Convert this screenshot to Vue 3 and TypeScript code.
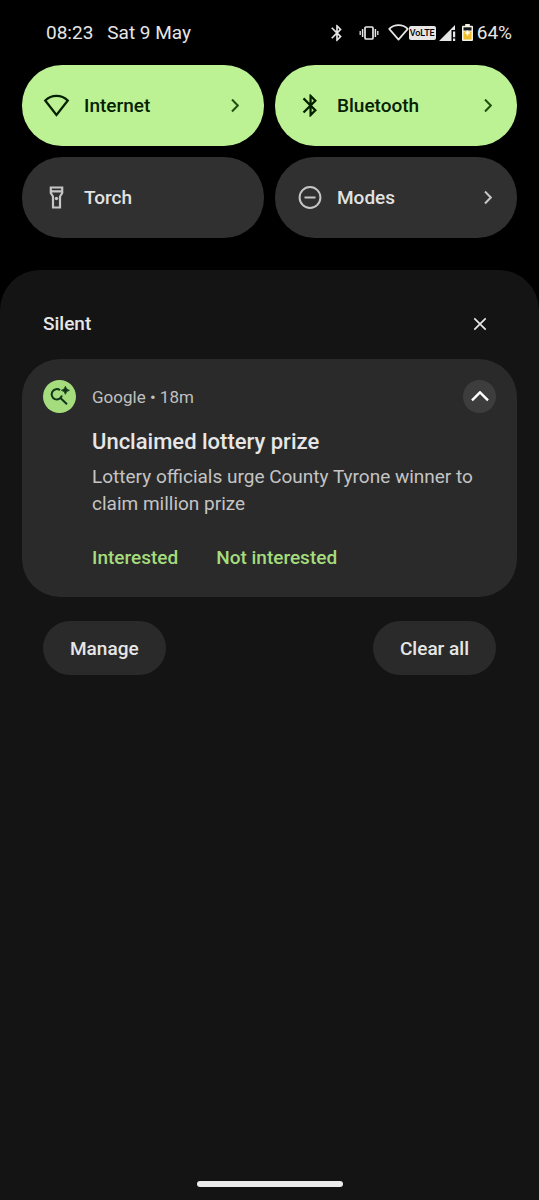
<script setup lang="ts">
import { ref } from 'vue'

interface Tile {
  id: 'internet' | 'bluetooth' | 'torch' | 'modes'
  label: string
  active: boolean
  more: boolean
}

const tiles = ref<Tile[]>([
  { id: 'internet', label: 'Internet', active: true, more: true },
  { id: 'bluetooth', label: 'Bluetooth', active: true, more: true },
  { id: 'torch', label: 'Torch', active: false, more: false },
  { id: 'modes', label: 'Modes', active: false, more: true },
])

const bluetoothPath =
  'M17.71 7.71L12 2h-1v7.59L6.41 5 5 6.41 10.59 12 5 17.59 6.41 19 11 14.41V22h1l5.71-5.71-4.3-4.29 4.3-4.29zM13 5.83l1.88 1.88L13 9.59V5.83zm1.88 10.46L13 18.17v-3.76l1.88 1.88z'

const toggle = (tile: Tile) => {
  tile.active = !tile.active
}
</script>

<template>
  <div class="screen">
    <header class="status">
      <div class="status-side clock">
        <span>08:23</span>
        <span>Sat 9 May</span>
      </div>
      <div class="status-side system">
        <svg class="s-bt" width="20" height="20" viewBox="0 0 24 24" fill="currentColor" aria-label="Bluetooth">
          <path :d="bluetoothPath" />
        </svg>
        <svg class="s-vib" width="20" height="16" viewBox="0 0 20 16" fill="none" stroke="currentColor" aria-label="Vibrate">
          <rect x="6" y="2" width="8" height="12" rx="1" stroke-width="1.7" />
          <path d="M3.6 4v8M16.4 4v8" stroke-width="1.5" />
          <path d="M1.2 6v4M18.8 6v4" stroke-width="1.3" />
        </svg>
        <svg class="s-wifi" width="21" height="17" viewBox="0 0 21 17" fill="none" stroke="currentColor" stroke-width="1.7" stroke-linejoin="round" aria-label="Wi-Fi">
          <path d="M10.5 15.6L1.2 4.9Q5.2 1.2 10.5 1.2T19.8 4.9Z" />
        </svg>
        <span class="volte">VoLTE</span>
        <svg class="s-signal" width="17" height="16" viewBox="0 0 17 16" fill="currentColor" aria-label="Mobile signal">
          <path d="M0 16L12.5 3.5V16ZM12.5 3.5L16 0V5H12.5Z" />
          <path d="M14 6.5h2.2v5.7H14zM14 13.6h2.2V16H14z" />
        </svg>
        <svg class="s-battery" width="11" height="17" viewBox="0 0 11 17" aria-label="Battery">
          <path d="M3.2 0h4.6v1.8H10a1 1 0 0 1 1 1V16a1 1 0 0 1-1 1H1a1 1 0 0 1-1-1V2.8a1 1 0 0 1 1-1h2.2z" fill="#f4f1e6" />
          <path d="M1.5 3.3h8v3.2h-8z" fill="#161616" />
          <path d="M1.5 7.5h8v8h-8z" fill="#edbd2c" />
          <path d="M5.5 6.5v5M3.2 9h4.6" stroke="#fff" stroke-width="1.6" />
        </svg>
        <span class="percent">64%</span>
      </div>
    </header>

    <section class="tiles" aria-label="Quick settings">
      <button
        v-for="tile in tiles"
        :key="tile.id"
        type="button"
        class="tile"
        :class="{ active: tile.active }"
        :aria-pressed="tile.active"
        @click="toggle(tile)"
      >
        <svg v-if="tile.id === 'internet'" class="tile-icon" viewBox="0 0 28 28" fill="none" stroke="currentColor" stroke-width="2.2" aria-hidden="true">
          <path d="M13.5 23L2.2 8.5Q7 3.8 13.5 3.8T24.8 8.500Z" />
        </svg>
        <svg v-else-if="tile.id === 'bluetooth'" class="tile-icon" viewBox="-1 0 25 25" fill="currentColor" aria-hidden="true">
          <path :d="bluetoothPath" />
        </svg>
        <svg v-else-if="tile.id === 'torch'" class="tile-icon" viewBox="0 0 28 28" fill="none" stroke="currentColor" stroke-width="2.2" aria-hidden="true">
          <path d="M7.8 3.500h11.400v5.500l-2.200 3.500v11h-7v-11L7.800 9ZM7.800 7.300h11.400" />
          <circle cx="13.500" cy="14.500" r="1.700" fill="currentColor" stroke="none" />
        </svg>
        <svg v-else class="tile-icon" viewBox="0 0 28 28" fill="none" stroke="currentColor" stroke-width="2" aria-hidden="true">
          <circle cx="14" cy="13.500" r="10.400" />
          <path d="M8.500 13.500h11" />
        </svg>
        <span class="tile-label">{{ tile.label }}</span>
        <svg v-if="tile.more" class="chevron" width="8" height="14" viewBox="0 0 8 14" fill="none" stroke="currentColor" stroke-width="2" aria-hidden="true">
          <path d="M1 0.500l5.800 6L1 12.500" />
        </svg>
      </button>
    </section>

    <main class="shade">
      <div class="section-head">
        <h2>Silent</h2>
        <button type="button" class="round clear" aria-label="Clear silent notifications">
          <svg width="14" height="14" viewBox="0 0 14 14" fill="none" stroke="currentColor" stroke-width="1.7" aria-hidden="true">
            <path d="M1.3 1.3l11.400 11.400M12.700 1.300L1.300 12.700" />
          </svg>
        </button>
      </div>

      <article class="card">
        <svg class="app-icon" width="33" height="33" viewBox="0 0 33 33" aria-hidden="true">
          <circle cx="16.500" cy="16.500" r="16.500" fill="#a5dc7d" />
          <path d="M17 10.100A5.200 5.200 0 1 0 18.900 15.600M17.700 18.300L24 24.300" fill="none" stroke="#12351a" stroke-width="2" />
          <path d="M22.400 6.300Q23 9.700 26.400 10.300Q23 10.900 22.400 14.300Q21.800 10.900 18.400 10.300Q21.800 9.700 22.400 6.300Z" fill="#12351a" stroke="#12351a" stroke-width="0.800" />
        </svg>
        <div class="card-body">
          <div class="meta">
            <span>Google • 18m</span>
            <button type="button" class="round collapse" aria-label="Collapse">
              <svg width="18" height="11" viewBox="0 0 18 11" fill="none" stroke="currentColor" stroke-width="2.400" aria-hidden="true">
                <path d="M1 9.300L9 1.300L17 9.300" />
              </svg>
            </button>
          </div>
          <h3>Unclaimed lottery prize</h3>
          <p>Lottery officials urge County Tyrone winner to claim million prize</p>
          <div class="actions">
            <button type="button">Interested</button>
            <button type="button">Not interested</button>
          </div>
        </div>
      </article>

      <div class="footer">
        <button type="button">Manage</button>
        <button type="button">Clear all</button>
      </div>

      <div class="home-bar"></div>
    </main>
  </div>
</template>

<style>
body {
  margin: 0;
  background: #000;
}
</style>

<style scoped>
.screen {
  display: flex;
  flex-direction: column;
  min-height: 100vh;
  background: #000;
  color: #e6e6e6;
  font-family: Roboto, "Liberation Sans", sans-serif;
}

.screen *,
.screen {
  box-sizing: border-box;
}

button {
  margin: 0;
  padding: 0;
  border: 0;
  background: none;
  color: inherit;
  font: inherit;
  cursor: pointer;
}

svg {
  display: block;
  flex: none;
}

.status {
  display: flex;
  justify-content: space-between;
  align-items: center;
  height: 65px;
  padding: 0 27px 0 46px;
  font-size: 19px;
}

.status-side {
  display: flex;
  align-items: center;
}

.clock {
  gap: 14px;
}

.s-bt {
  margin-right: 12px;
}

.s-vib {
  margin-right: 9px;
}

.volte {
  padding: 0 1px;
  margin-right: 3px;
  border-radius: 2px;
  background: #e6e6e6;
  color: #000;
  font-size: 9px;
  font-weight: 500;
  line-height: 14px;
}

.s-signal {
  margin-right: 6px;
}

.s-battery {
  margin-right: 4px;
}

.tiles {
  display: grid;
  grid-template-columns: 1fr 1fr;
  gap: 11px;
  padding: 0 22px;
}

.tile {
  display: flex;
  align-items: center;
  height: 81px;
  padding: 0 25px 0 21px;
  border-radius: 40px;
  background: #303030;
  color: #e2e2e2;
  font-size: 19px;
  font-weight: 500;
  text-align: left;
}

.tile.active {
  background: #bcf294;
  color: #062100;
}

.tile-icon {
  width: 28px;
  height: 28px;
  margin-right: 13px;
}

.tile:not(.active) .tile-icon,
.tile:not(.active) .chevron {
  color: #c6c6c6;
}

.tile.active .chevron {
  color: #1f5010;
}

.tile-label {
  flex: 1;
}

.shade {
  display: flex;
  flex: 1;
  flex-direction: column;
  margin-top: 32px;
  padding: 37px 22px 13px;
  border-radius: 40px 40px 0 0;
  background: #141414;
}

.section-head {
  display: flex;
  justify-content: space-between;
  align-items: center;
  padding: 0 21px;
}

h2,
h3,
p {
  margin: 0;
}

h2 {
  font-size: 19px;
  font-weight: 500;
}

.round {
  display: flex;
  align-items: center;
  justify-content: center;
  width: 33px;
  height: 33px;
  border-radius: 50%;
}

.collapse {
  background: #3d3d3d;
  color: #fff;
}

.card {
  display: flex;
  gap: 16px;
  margin-top: 19px;
  padding: 21px 21px 26px;
  border-radius: 38px;
  background: #2a2a2a;
}

.card-body {
  flex: 1;
}

.meta {
  display: flex;
  justify-content: space-between;
  align-items: center;
  color: #c0c0c0;
  font-size: 17px;
}

h3 {
  margin-top: 15px;
  font-size: 22px;
  font-weight: 500;
  line-height: 27px;
}

p {
  margin-top: 8px;
  color: #c4c4c4;
  font-size: 19px;
  line-height: 27px;
}

.actions {
  display: flex;
  gap: 38px;
  margin-top: 27px;
  color: #a5dc7d;
  font-size: 19px;
  font-weight: 500;
  line-height: 27px;
}

.footer {
  display: flex;
  justify-content: space-between;
  margin-top: 24px;
  padding: 0 21px;
}

.footer button {
  height: 54px;
  padding: 0 27px;
  border-radius: 27px;
  background: #2a2a2a;
  font-size: 19px;
  font-weight: 500;
}

.home-bar {
  width: 146px;
  height: 6px;
  margin: auto auto 0;
  border-radius: 3px;
  background: #ececec;
}
</style>
